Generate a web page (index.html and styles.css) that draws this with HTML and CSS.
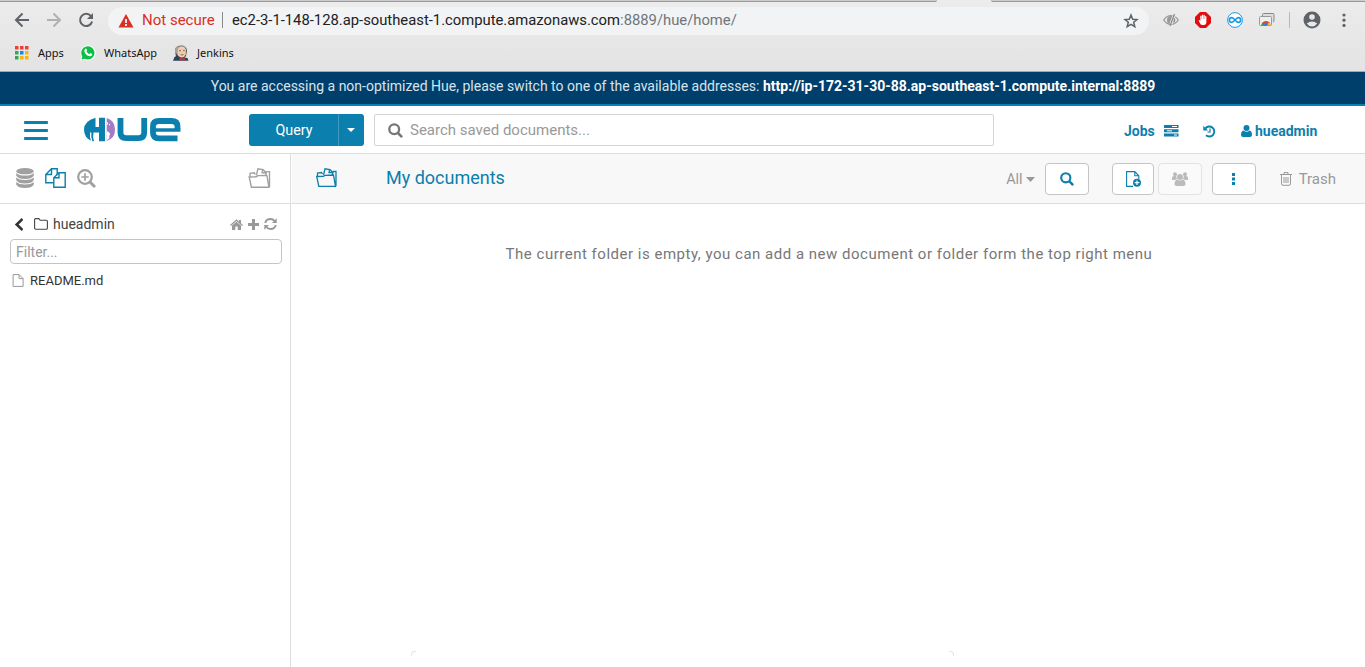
FILE: index.html
```html
<!DOCTYPE html>
<html lang="en">
<head>
<meta charset="utf-8">
<title>Hue - My documents</title>
<link rel="stylesheet" href="styles.css">
</head>
<body>
<div class="browser">
  <div class="tabs"><i class="tab-left"></i><i class="tab-right"></i></div>
  <div class="toolbar">
    <svg class="nav-icon" width="16" height="16" viewBox="0 0 16 16" fill="none" stroke="#5f6368" stroke-width="2"><path d="M15 8H2M8.500 1.500 2 8l6.500 6.500"/></svg>
    <svg class="nav-icon" width="16" height="16" viewBox="0 0 16 16" fill="none" stroke="#b0b1b3" stroke-width="2"><path d="M1 8h13M7.500 1.500 14 8l-6.500 6.500"/></svg>
    <svg class="nav-icon" width="16" height="16" viewBox="0 0 16 16"><path d="M13 4.200A6.100 6.100 0 1 0 14.100 9.500" fill="none" stroke="#5f6368" stroke-width="2"/><path d="M15 1v6H9z" fill="#5f6368"/></svg>
    <div class="address">
      <svg width="16" height="14" viewBox="0 0 16 14"><path d="M8 0l7.500 13.500H.5z" fill="#d93025"/><path d="M8 5v4M8 10v2" stroke="#fff" stroke-width="1.700"/></svg>
      <span class="insecure">Not secure</span>
      <span class="url"><span class="host">ec2-3-1-148-128.ap-southeast-1.compute.amazonaws.com</span>:8889/hue/home/</span>
      <svg class="star" width="16" height="16" viewBox="0 0 16 16"><path d="M8 2l1.700 4.200 4.300.3-3.300 2.800 1.100 4.400L8 11.300l-3.800 2.400 1.100-4.400L2 6.500l4.300-.3z" fill="none" stroke="#5f6368" stroke-width="1.500"/></svg>
    </div>
    <div class="extensions">
      <svg width="16" height="16" viewBox="0 0 16 16"><path d="M.7 8Q3.500 3.600 8 3.600T15.300 8Q12.500 12.400 8 12.400T.7 8z" fill="none" stroke="#999" stroke-width="1.300"/><path d="M7.500 3.800Q2.500 5 4.500 11l2 1L9.500 4z" fill="#999"/><path d="M8 12l3.500-9.500" stroke="#e9e9e9" stroke-width="3"/><path d="M7 14l4.500-12M11 6.500q1.500 2-.5 4" fill="none" stroke="#8c8c8c" stroke-width="1.300"/></svg>
      <svg width="16" height="16" viewBox="0 0 16 16"><path d="M5 0h6l5 5v6l-5 5H5l-5-5V5z" fill="#e40d0d"/><path d="M5.500 12.200 3.600 8.500q.4-1.200 1.700.2V4q.7-.9 1.300 0v3h.3V3q.7-.9 1.300 0v4h.3V3.300q.7-.9 1.300 0V7h.3V4.500q.7-.9 1.300 0V10q0 3-2.600 3H7.500q-1.300 0-2-.8" fill="#fff"/></svg>
      <svg width="16" height="16" viewBox="0 0 16 16" fill="none" stroke="#1a9be8"><circle cx="8" cy="8" r="7.400" fill="#fff"/><path d="M8 8C6 5.500 5.200 5.600 4.800 5.600a2.400 2.400 0 0 0 0 4.800C6.500 10.400 9.500 5.600 11.200 5.600a2.400 2.400 0 0 1 0 4.800C10 10.400 9 9.200 8 8" stroke-width="1.600"/></svg>
      <svg width="16" height="16" viewBox="0 0 16 16"><path d="M3.500 4V2.500q0-1 1-1H14q1 0 1 1V9q0 1-1 1" fill="#ddd" stroke="#888"/><rect x=".5" y="4.500" width="12" height="9" rx="1" fill="#eee" stroke="#999"/><path d="M2.500 13.500a4.500 4.500 0 0 1 9 0z" fill="#e84434"/><path d="M2.500 13.500a4.500 4.500 0 0 1 1-2.800L7 13.500z" fill="#21a35a"/><path d="M7 13.500l3-3a4.500 4.500 0 0 1 1.500 3z" fill="#f7c515"/><circle cx="7" cy="12.300" r="1.800" fill="#347de0"/></svg>
      <i class="divider"></i>
      <svg width="18" height="18" viewBox="0 0 18 18"><circle cx="9" cy="9" r="8.500" fill="#5f6368"/><circle cx="9" cy="6" r="2.800" fill="#e8e8e8"/><path d="M3.800 12.500q5.200-4 10.400 0Q12.200 15.500 9 15.500t-5.200-3" fill="#e8e8e8"/></svg>
      <svg class="kebab" width="4" height="16" viewBox="0 0 4 16" fill="#5f6368"><circle cx="2" cy="3" r="1.600"/><circle cx="2" cy="8.200" r="1.600"/><circle cx="2" cy="13.400" r="1.600"/></svg>
    </div>
  </div>
  <div class="bookmarks">
    <svg width="14" height="14" viewBox="0 0 14 14"><path d="M0 0h3.500v3.500H0zM5 0h3.500v3.500H5zM10 0h3.500v3.500H10z" fill="#e94235"/><path d="M0 5h3.500v3.500H0zM0 10h3.500v3.500H0z" fill="#34a853"/><path d="M5 5h3.500v3.500H5z" fill="#1a85f5"/><path d="M10 5h3.500v3.500H10zM5 10h3.500v3.500H5zM10 10h3.500v3.500H10z" fill="#fbb50a"/></svg>
    <span class="bm-apps">Apps</span>
    <svg width="16" height="16" viewBox="0 0 16 16"><path d="M.3 15.700 1.400 11.500A7.600 7.600 0 1 1 4.500 14.600z" fill="#fff"/><path d="M1.500 14.500 2.300 11.500A6.600 6.600 0 1 1 4.700 13.700z" fill="#08c143"/><path d="M5 4q1-1 1.500 0l.7 1.600-.8 1q1 1.900 2.900 2.600l1-1.100 2 1q0 2.400-2.600 2.200Q5.300 10.500 4.300 6q0-1.200.7-2" fill="#fff"/></svg>
    <span class="bm-whatsapp">WhatsApp</span>
    <svg width="16" height="16" viewBox="0 0 16 16"><path d="M3 12 2 6q-.5-5 6-5.500 5.500 0 6 5.500l-1 5-2 2.500H5z" fill="#5b4f47"/><path d="M4 5.500Q4.500 1.200 8.500 1.200t4.500 4.300l-.3 4Q11.500 12.500 9 12.500T4.500 10z" fill="#edcdb2"/><path d="M2 7q-.5-5 3-6l1.500 1L4.800 4 4.500 7.500 3 9z" fill="#aaa196"/><path d="M6 5.700h2m2 0h1.800M7.500 9.600q1.500.8 3 0" stroke="#786252" fill="none" stroke-width=".9"/><path d="M0 15.700 1.500 12l3-1.500 3.500 3 3-1 3.500.5 1 2.700z" fill="#29445d"/><path d="M6.500 12.500 9 13.700l2.800-1.200v3.200L9 14.700l-2.500 1z" fill="#cf3439"/></svg>
    <span class="bm-jenkins">Jenkins</span>
  </div>
</div>
<div class="banner"><span>You are accessing a non-optimized Hue, please switch to one of the available addresses: <b>http://ip-172-31-30-88.ap-southeast-1.compute.internal:8889</b></span></div>
<header class="header">
  <div class="burger"><i></i><i></i><i></i></div>
  <svg class="logo" width="97" height="25" viewBox="0 0 97 25"><path d="M11.500.7V10H15V.7h6v23.600h-6V15.500H9.500q-1 4 .5 8.800H8Q0 21 0 12.500T11.500.7" fill="#0b7fad"/><path d="M6.800 15.500q-.8 4 1 8.800" fill="none" stroke="#fff" stroke-width="1.300"/><path d="M22.700 1q8.300 2.500 8.300 11.500T22.700 24z" fill="#a57bc4"/><path d="M22.700 14l2 1 1.500 2-1 2 .3 2-2.800 2.500zM22.700 5l1.500 1-.5 1.500-1 .5zM25 7h1v1.200h-1z" fill="#fff"/><path d="M36.500 1v14.500q0 5.700 5.700 5.700h12.300q5.700 0 5.700-5.700V1" fill="none" stroke="#0b7fad" stroke-width="5.800"/><path d="M93.500 21.300H75q-6 0-6-5.500V9.500q0-5.500 6-5.500h12.500q6 0 6 5.500v3" fill="none" stroke="#0b7fad" stroke-width="5.800"/><path d="M69 13h27.400" stroke="#0b7fad" stroke-width="3.500"/></svg>
  <div class="query"><span>Query</span><i><svg width="8" height="4" viewBox="0 0 8 4"><path d="M0 0h8L4 4z" fill="#fff"/></svg></i></div>
  <div class="search"><svg width="15" height="15" viewBox="0 0 15 15" fill="none" stroke="#767676"><circle cx="6.200" cy="6.200" r="4.900" stroke-width="2.300"/><path d="M9.800 9.800l4.300 4.300" stroke-width="2.600"/></svg><span>Search saved documents...</span></div>
  <div class="account">
    <b class="jobs">Jobs</b>
    <svg width="15" height="12" viewBox="0 0 15 12"><path d="M0 0h14.500v3H0zM0 4.300h14.500v3H0zM0 8.600h14.500v3H0z" fill="#0b7fad"/><path d="M8 1.500h5M3 5.800h5M10 10h3" stroke="#fff"/></svg>
    <svg class="history" width="13" height="13" viewBox="0 0 13 13" fill="none" stroke="#0b7fad"><path d="M2.500 3.300A5 5 0 1 1 3 10.300" stroke-width="1.900"/><path d="M.3.800v4.700H5z" fill="#0b7fad" stroke="none"/><path d="M7 3.500V7H4.500" stroke-width="1.200"/></svg>
    <svg class="user" width="11" height="12" viewBox="0 0 11 12" fill="#0b7fad"><circle cx="5.500" cy="3.100" r="3"/><path d="M2.500 5.500q3 2.500 6 0Q11 6 11 10q-.2 2-2 2H2q-1.800 0-2-2 0-4 2.500-4.500"/></svg>
    <b class="username">hueadmin</b>
  </div>
</header>
<div class="page">
  <aside class="sidebar">
    <div class="assist-tabs">
      <svg width="18" height="20" viewBox="0 0 18 20" fill="#a0a0a0"><ellipse cx="9" cy="3.200" rx="8.800" ry="3.100"/><path d="M.2 5Q3 7.600 9 7.600T17.800 5v2.500Q16 11 9 11T.2 7.500zM.2 9.500Q3 12 9 12t8.800-2.500V12Q16 15.500 9 15.500T.2 12zM.2 14Q3 16.500 9 16.500t8.800-2.500v2.500Q16 20 9 20T.2 16.500z"/></svg>
      <svg class="docs" width="21" height="20" viewBox="0 0 21 20" fill="#fff" stroke="#0b7fad" stroke-width="1.400"><path d="M6.500.8h5.700v14H.8V6.500z"/><path d="M6.500.8v5.700H.8" fill="none"/><path d="M14 4.800h6.200v14.500H8.800v-9.500z"/><path d="M14 4.800v5H8.800" fill="none"/></svg>
      <svg class="zoom-in" width="19" height="19" viewBox="0 0 19 19" fill="none" stroke="#a0a0a0"><circle cx="8" cy="8" r="6.800" stroke-width="2.200"/><path d="M13 13l5 5" stroke-width="3"/><path d="M8 4.300v7.400M4.300 8h7.400" stroke-width="1.700"/></svg>
      <svg class="folder-tab" width="23" height="20" viewBox="0 0 21 19" fill="none" stroke="#a0a0a0" stroke-width="1.300"><path d="M2.800 18.300.7 8.500l6.800-.2 1.500-1 8.500-.3 2 11.300zM1.500 8V5l4-.5 1 1.500M7.500 7 9 .8l5 .8 3 2.900-.8 2.500M13.500 1.500 13 4.500h4M17 3.500h3v14.500"/></svg>
    </div>
    <div class="crumbs">
      <svg width="9" height="13" viewBox="0 0 9 13"><path d="M8.500 1 2.700 6.500l5.800 5.500" fill="none" stroke="#333" stroke-width="2.600"/></svg>
      <svg class="folder" width="14" height="12" viewBox="0 0 14 12"><path d="M.6 10V1.600q0-1 1-1h3.200l1.400 1.700h6q1.200 0 1.200 1.200V10q0 1.300-1.300 1.300H1.900Q.6 11.300.6 10z" fill="none" stroke="#444" stroke-width="1.100"/></svg>
      <span>hueadmin</span>
      <div class="actions">
        <svg width="13" height="11" viewBox="0 0 13 11"><path d="M0 6 6.500.3 9 2.500V1h2v3.200L13 6l-.8 1-5.700-5-5.700 5z"/><path d="M2 6.600l4.500-3.900L11 6.600V11H7.700V7.500H5.300V11H2z"/></svg>
        <svg width="11" height="11" viewBox="0 0 11 11"><path d="M4 0h3v4h4v3H7v4H4V7H0V4h4z"/></svg>
        <svg width="13" height="12" viewBox="0 0 13 12"><path d="M1.200 5Q2 1 6.500 1q2.500 0 4.200 2M11.800 7q-1 4-5.300 4Q4 11 2.300 9" fill="none" stroke="#999" stroke-width="1.900"/><path d="M12.700.2V5H8zM.3 11.800V7H5z"/></svg>
      </div>
    </div>
    <div class="filter">Filter...</div>
    <div class="file"><svg width="12" height="13" viewBox="0 0 12 13" fill="none" stroke="#999"><path d="M1.100.6h6l4 4v7.800h-10zM7.100.6v4h4"/></svg><span>README.md</span></div>
  </aside>
  <main class="main">
    <div class="doc-bar">
      <svg class="doc-folder" width="21" height="19" viewBox="0 0 21 19" fill="none" stroke="#0b7fad" stroke-width="1.300"><path d="M2.800 18.300.7 8.500l6.800-.2 1.500-1 8.500-.3 2 11.300zM1.500 8V5l4-.5 1 1.500M7.500 7 9 .8l5 .8 3 2.900-.8 2.500M13.500 1.500 13 4.500h4M17 3.500h3v14.500"/></svg>
      <h1>My documents</h1>
      <div class="tools">
        <span class="all">All</span><svg class="all-caret" width="9" height="5" viewBox="0 0 9 5"><path d="M0 0h9L4.500 5z" fill="#999"/></svg>
        <div class="btn find"><svg width="14" height="14" viewBox="0 0 15 15" fill="none" stroke="#0b7fad"><circle cx="6.200" cy="6.200" r="4.900" stroke-width="2.300"/><path d="M9.800 9.800l4.300 4.300" stroke-width="2.600"/></svg></div>
        <div class="btn new"><svg width="15" height="16" viewBox="0 0 15 16"><path d="M7 15.400H.6V.6h8.200l4 4.200V8M8.800.6v4.200h4" fill="none" stroke="#0b7fad" stroke-width="1.100"/><circle cx="11" cy="11.700" r="4" fill="#0b7fad"/><path d="M11 9.400V14M8.700 11.700h4.600" stroke="#fff" stroke-width="1.200"/></svg></div>
        <div class="btn share"><svg width="16" height="14" viewBox="0 0 16 14" fill="#bbb"><circle cx="3" cy="2.300" r="2"/><circle cx="13" cy="2.300" r="2"/><path d="M0 8V6q0-2 2-2h2l1 3-2 1zM16 8V6q0-2-2-2h-2l-1 3 2 1z"/><circle cx="8" cy="5" r="3"/><path d="M5 7.500q3 2 6 0 2.500 1 2.500 4.500 0 2-2 2h-7q-2 0-2-2Q2.500 8.500 5 7.500"/></svg></div>
        <div class="btn more"><svg width="3" height="12" viewBox="0 0 3 12"><path d="M0 0h3v3H0zM0 4.500h3v3H0zM0 9h3v3H0z" fill="#0b7fad"/></svg></div>
        <svg class="trash-icon" width="12" height="14" viewBox="0 0 12 14" fill="none" stroke="#999"><path d="M0 2.500h12M4 2.500V.6h4v1.900M1.500 3v8.800q0 1.500 1.500 1.500h6q1.500 0 1.500-1.500V3M4 5v6M6 5v6M8 5v6"/></svg><span class="trash">Trash</span>
      </div>
    </div>
    <p class="empty">The current folder is empty, you can add a new document or folder form the top right menu</p>
    <div class="dock"></div>
  </main>
</div>
</body>
</html>
```
FILE: styles.css
```css
* { box-sizing: border-box; }
body { margin: 0; height: 667px; overflow: hidden; display: flex; flex-direction: column; background: #fff; color: #444; font: 14px Roboto, sans-serif; }
svg { display: block; flex: none; }
span, b, h1 { white-space: nowrap; }
.browser { height: 72px; flex: none; background: linear-gradient(#ececec, #e3e3e3); border-bottom: 1px solid #a7a7a3; }
.tabs { height: 2px; display: flex; justify-content: space-between; }
.tab-left, .tab-right { height: 2px; background: #ccc; border-bottom: 1px solid #999; }
.tab-left { width: 937px; border-bottom-right-radius: 3px; }
.tab-right { width: 374px; border-bottom-left-radius: 3px; }
.toolbar { height: 36px; display: flex; align-items: center; padding-left: 14px; }
.nav-icon { margin-right: 16px; }
.address { width: 1041px; height: 28px; margin: 1px 0 0 -2px; border-radius: 14px; background: #f1f3f4; display: flex; align-items: center; padding: 0 10px; font-size: 14.800px; }
.insecure { color: #d93025; margin-left: 8px; width: 81px; padding-right: 8px; border-right: 1px solid #8a8a8a; line-height: 16px; margin-top: -1px; font-size: 15px; }
.url { color: #70757a; margin: -2px 0 0 9px; }
.host { color: #202124; }
.star { margin-left: auto; }
.extensions { display: flex; align-items: center; gap: 16px; margin-left: 14px; }
.divider { width: 1px; height: 16px; background: #b8b8b8; margin-left: -2px; margin-right: -3px; }
.kebab { margin-left: 5px; }
.bookmarks { height: 30px; display: flex; align-items: center; padding: 0 0 1px 15px; color: #111; font: 11px "Noto Sans", sans-serif; }
.bm-apps { margin: 0 16px 0 9px; width: 26px; }
.bm-whatsapp { margin: 0 16px 0 8px; width: 53px; }
.bm-jenkins { margin-left: 8px; }
.banner { height: 34px; flex: none; background: #003f6c; border-bottom: 2px solid #0b7fad; color: #d9e3ea; text-align: center; line-height: 29px; font-size: 14px; padding-left: 1px; }
.banner b { color: #fff; }
.header { height: 48px; flex: none; display: flex; align-items: center; border-bottom: 1px solid #ddd; padding-left: 24px; color: #0b7fad; }
.burger { width: 24px; height: 19px; display: flex; flex-direction: column; justify-content: space-between; margin-top: 2px; }
.burger i { height: 3px; border-radius: 1px; background: #0b7fad; }
.logo { margin: -1px 68px 0 36px; }
.query { width: 115px; height: 32px; display: flex; border-radius: 3px; background: #0b7fad; color: #fff; line-height: 32px; margin-top: 1px; font-size: 14.300px; }
.query span { width: 90px; text-align: center; border-right: 1px solid #4298bd; padding-left: 1px; }
.query i { flex: 1; display: flex; align-items: center; justify-content: center; padding-right: 2px; }
.search { width: 620px; height: 32px; margin: 1px 0 0 10px; border: 1px solid #d5d5d5; border-radius: 2px; display: flex; align-items: center; padding-left: 13px; color: #999; font-size: 15px; }
.search span { margin-left: 7px; }
.account { display: flex; align-items: center; margin: 3px 0 0 130px; }
.jobs { width: 31px; margin-right: 9px; }
.history { margin-left: 24px; }
.user { margin: 0 3px 0 25px; }
.page { flex: 1; min-height: 0; display: flex; }
.sidebar { width: 291px; flex: none; border-right: 1px solid #ddd; }
.assist-tabs { height: 50px; border-bottom: 1px solid #ddd; display: flex; align-items: center; padding: 0 19px 2px 16px; }
.docs { margin-left: 11px; }
.zoom-in { margin: 1px 0 0 11px; }
.folder-tab { margin-left: auto; }
.crumbs { height: 35px; display: flex; align-items: center; padding: 5px 13px 0 14px; }
.folder { margin: 0 5px 0 11px; }
.actions { margin-left: auto; display: flex; align-items: center; gap: 5px; fill: #999; }
.filter { height: 25px; width: 272px; margin-left: 10px; border: 1px solid #c4c4c4; border-radius: 4px; line-height: 24px; padding-left: 5px; color: #999; }
.file { display: flex; align-items: center; margin: 9px 0 0 12px; font-size: 13px; color: #333; }
.file span { margin-left: 6px; }
.main { flex: 1; min-width: 0; display: flex; flex-direction: column; align-items: center; }
.doc-bar { width: 100%; height: 50px; flex: none; display: flex; align-items: center; border-bottom: 1px solid #ddd; border-left: 1px solid #fff; background: #f8f8f8; }
.doc-folder { margin: -3px 0 0 24px; }
h1 { margin: -3px 0 0 49px; color: #0b7fad; font-size: 18px; font-weight: 400; }
.tools { display: flex; align-items: center; margin: 1px 29px 0 auto; color: #999; }
.all { font-size: 14.500px; }
.all-caret { margin: 0 10px 0 3px; }
.btn { width: 44px; height: 32px; border: 1px solid #c5c5c5; border-radius: 4px; background: #fff; display: flex; align-items: center; justify-content: center; }
.new { width: 42px; margin-left: 23px; padding-left: 2px; }
.share { margin-left: 4px; border-color: #e2e2e2; background: #fafafa; }
.more { margin-left: 10px; }
.trash-icon { margin: 0 7px 0 24px; }
.trash { font-size: 15px; }
.empty { margin: 41px 0 0; padding-left: 2px; font-size: 15px; line-height: 18px; letter-spacing: .51px; color: #777; white-space: nowrap; }
.dock { width: 543px; height: 16px; margin: auto auto 0 120px; position: relative; }
.dock::before, .dock::after { content: ""; position: absolute; top: 0; width: 4px; height: 4px; border-top: 1px solid #e4e4e4; }
.dock::before { left: 0; border-left: 1px solid #e4e4e4; border-top-left-radius: 4px; }
.dock::after { right: 0; border-right: 1px solid #e4e4e4; border-top-right-radius: 4px; }
```
